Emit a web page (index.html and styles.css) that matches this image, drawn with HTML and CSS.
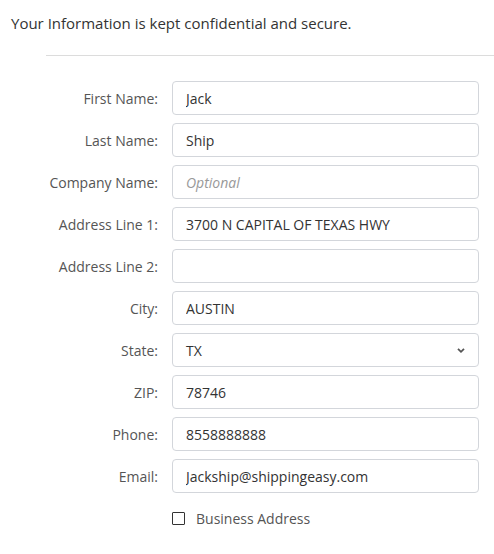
FILE: index.html
```html
<!DOCTYPE html>
<html>
<head>
<meta charset="utf-8">
<link rel="stylesheet" href="styles.css">
</head>
<body>
<p class="intro">Your Information is kept confidential and secure.</p>
<div class="divider"></div>
<form class="form">
  <div class="row"><label class="label">First Name:</label><input class="field" value="Jack"></div>
  <div class="row"><label class="label">Last Name:</label><input class="field" value="Ship"></div>
  <div class="row"><label class="label">Company Name:</label><input class="field" placeholder="Optional"></div>
  <div class="row"><label class="label">Address Line 1:</label><input class="field" value="3700 N CAPITAL OF TEXAS HWY"></div>
  <div class="row"><label class="label">Address Line 2:</label><input class="field" value=""></div>
  <div class="row"><label class="label">City:</label><input class="field" value="AUSTIN"></div>
  <div class="row"><label class="label">State:</label>
    <div class="field select"><span>TX</span>
      <svg class="chev" width="10" height="7" viewBox="0 0 10 7"><path d="M2 1.8 L5 4.8 L8 1.8" fill="none" stroke="#555" stroke-width="1.8"/></svg>
    </div>
  </div>
  <div class="row"><label class="label">ZIP:</label><input class="field" value="78746"></div>
  <div class="row"><label class="label">Phone:</label><input class="field" value="8558888888"></div>
  <div class="row"><label class="label">Email:</label><input class="field" value="Jackship@shippingeasy.com"></div>
  <div class="row check-row"><span class="label"></span><label class="check"><span class="box"></span>Business Address</label></div>
</form>
</body>
</html>
```
FILE: styles.css
```css
html, body {
  margin: 0;
  padding: 0;
  background: #fff;
  font-family: "Open Sans", "Liberation Sans", sans-serif;
  color: #333;
}
.intro {
  margin: 0;
  padding: 12px 0 0 11px;
  font-size: 15px;
  line-height: 22px;
  color: #333;
}
.divider {
  margin: 21px 0 0 46px;
  border-top: 1px solid #dcdcdc;
}
.form {
  display: flex;
  flex-direction: column;
  gap: 8px;
  padding-top: 25px;
}
.row {
  display: flex;
  align-items: center;
  gap: 14px;
}
.label {
  width: 158px;
  text-align: right;
  font-size: 14px;
  color: #555;
  flex: none;
}
.field {
  box-sizing: border-box;
  width: 307px;
  height: 34px;
  border: 1px solid #d3d6db;
  border-radius: 4px;
  padding: 0 13px;
  font-family: "Open Sans", "Liberation Sans", sans-serif;
  font-size: 14px;
  color: #333;
  background: #fff;
  outline: none;
}
.field::placeholder {
  color: #999;
  font-style: italic;
}
.select {
  display: flex;
  align-items: center;
  justify-content: space-between;
  padding-right: 12px;
}
.chev {
  display: block;
}
.check-row {
  margin-top: 8px;
}
.check {
  display: flex;
  align-items: center;
  gap: 11px;
  font-size: 14px;
  color: #555;
}
.box {
  width: 11px;
  height: 11px;
  border: 1px solid #333;
  border-radius: 1px;
  box-sizing: content-box;
}
```
